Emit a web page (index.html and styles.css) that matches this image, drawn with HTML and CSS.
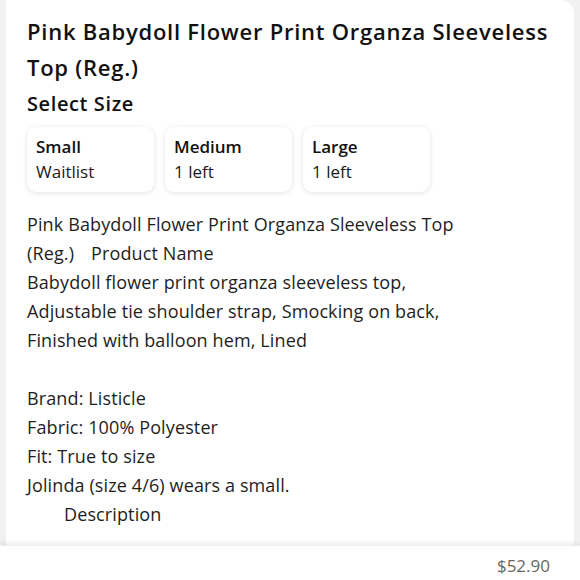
FILE: index.html
```html
<!DOCTYPE html>
<html>
<head>
<meta charset="utf-8">
<link rel="stylesheet" href="styles.css">
</head>
<body>
<div class="page">
  <main class="card">
    <h1 class="title">Pink Babydoll Flower Print Organza Sleeveless Top (Reg.)</h1>
    <h2 class="section">Select Size</h2>
    <div class="sizes">
      <div class="size"><div class="size-name">Small</div><div class="size-stock">Waitlist</div></div>
      <div class="size"><div class="size-name">Medium</div><div class="size-stock">1 left</div></div>
      <div class="size"><div class="size-name">Large</div><div class="size-stock">1 left</div></div>
    </div>
    <div class="desc">
      <p>Pink Babydoll Flower Print Organza Sleeveless Top <span class="nowrap">(Reg.)<span class="gap"></span>Product</span> Name</p>
      <p>Babydoll flower print organza sleeveless top,<br>Adjustable tie shoulder strap, Smocking on back,<br>Finished with balloon hem, Lined</p>
      <p class="blank">&nbsp;</p>
      <p>Brand: Listicle<br>Fabric: 100% Polyester<br>Fit: True to size<br>Jolinda (size 4/6) wears a small.</p>
      <p class="indent">Description</p>
    </div>
  </main>
  <footer class="bar">
    <span class="price">$52.90</span>
  </footer>
</div>
</body>
</html>
```

FILE: styles.css
```css
* { box-sizing: border-box; }
html, body { margin: 0; padding: 0; }
body {
  width: 580px;
  height: 580px;
  overflow: hidden;
  background: #f1f1f1;
  font-family: "Open Sans", "Noto Sans", sans-serif;
  color: #1a1a1a;
}
.page {
  height: 580px;
  display: flex;
  flex-direction: column;
}
.card {
  flex: 1;
  margin: 0 6px 0 6px;
  background: #ffffff;
  border-radius: 0 14px 0 0;
  padding: 13px 21px 0 21px;
  overflow: hidden;
}
.title {
  margin: 0;
  font-size: 22px;
  line-height: 36px;
  font-weight: 600;
  letter-spacing: 0.75px;
  color: #111;
}
.section {
  margin: 6px 0 0 0;
  font-size: 20px;
  line-height: 26px;
  font-weight: 600;
  letter-spacing: 0.6px;
  color: #111;
}
.sizes {
  display: flex;
  gap: 11px;
  margin-top: 10px;
}
.size {
  width: 127px;
  height: 65px;
  background: #fff;
  border-radius: 9px;
  box-shadow: 0 1px 5px rgba(0,0,0,0.12);
  padding: 7px 9px;
}
.size-name {
  font-size: 17px;
  font-weight: 600;
  line-height: 25px;
  color: #111;
}
.size-stock {
  font-size: 17px;
  line-height: 25px;
}
.desc {
  margin-top: 18px;
  font-size: 18px;
  line-height: 29px;
  letter-spacing: 0.12px;
  color: #1e1e1e;
}
.desc p { margin: 0; }
.nowrap { white-space: nowrap; }
.gap { display: inline-block; width: 17px; }
.indent { padding-left: 37px; }
.bar {
  height: 35px;
  flex: 0 0 35px;
  background: #fff;
  box-shadow: 0 -3px 4px rgba(0,0,0,0.06);
  border-top: 1px solid #ececec;
  display: flex;
  justify-content: flex-end;
  align-items: center;
  padding: 4px 30px 0 0;
}
.price {
  font-size: 17px;
  color: #666;
}
```
